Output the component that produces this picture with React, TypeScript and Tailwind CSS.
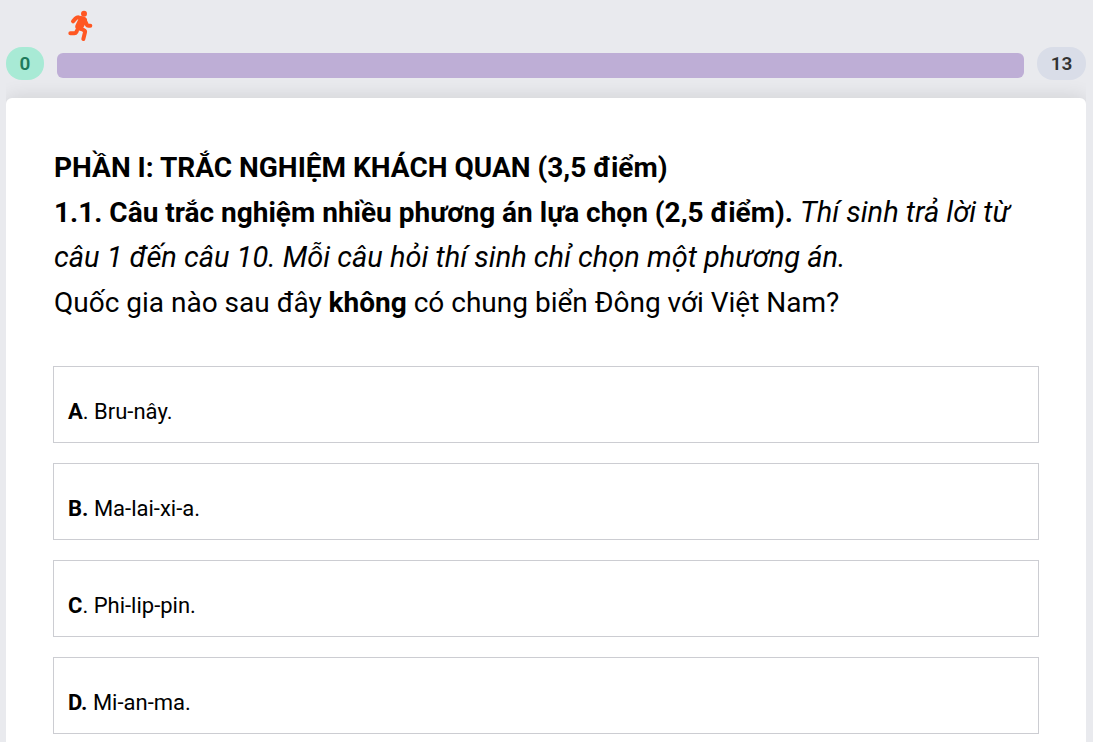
const TOTAL = 13

const ANSWERS: Array<{ id: string; mark: React.ReactNode; label: string }> = [
  { id: 'a', mark: <><b>A</b>.</>, label: 'Bru-nây.' },
  { id: 'b', mark: <b>B.</b>, label: 'Ma-lai-xi-a.' },
  { id: 'c', mark: <><b>C</b>.</>, label: 'Phi-lip-pin.' },
  { id: 'd', mark: <b>D.</b>, label: 'Mi-an-ma.' },
]

function Runner() {
  return (
    <svg width="26" height="32" viewBox="0 0 78 96" fill="none" aria-hidden="true">
      <circle cx="51" cy="11" r="9" fill="currentColor" />
      <path d="M38 18 L54 22 Q63 26 59 34 L50 51 L40 63 L29 58 Q22 52 26 44 L34 28Z" fill="currentColor" />
      <g stroke="currentColor" strokeWidth="12" strokeLinecap="round" strokeLinejoin="round">
        <path d="M18 34 L26 25 Q29 22 34 22 L50 26" />
        <path d="M53 30 L60 45 Q61 47 64 47 H70" />
        <path d="M37 53 L51 61 Q55 63 54 67 L49 87" />
        <path d="M10 70 H22 Q26 70 28 66 L30 62" />
      </g>
    </svg>
  )
}

function ProgressHeader({ done }: { done: number }) {
  return (
    <header className="pt-[10px] pr-[7px] pl-[6px]">
      <div className="pl-[61px] text-[#ff5722]">
        <Runner />
      </div>
      <div className="mt-[5px] flex items-center gap-[13px] text-[19px] leading-none font-semibold">
        <span className="flex h-[33px] w-[38px] items-center justify-center rounded-2xl bg-[#a8ead5] text-[#1f7a5c]">
          {done}
        </span>
        <div className="mt-1 h-[25px] flex-1 rounded-md bg-[#beaed6]" />
        <span className="flex h-[33px] w-[49px] items-center justify-center rounded-2xl bg-[#d9dde8] text-[#333]">
          {TOTAL}
        </span>
      </div>
    </header>
  )
}

export default function App() {
  return (
    <div className="min-h-screen bg-[#e9eaee] font-['Roboto',sans-serif] text-black">
      <ProgressHeader done={0} />
      {/* the wrapper clips the card shadow at its sides */}
      <div className="mr-[7px] ml-[6px] overflow-hidden pt-[18px]">
        <main className="rounded-t-md bg-white px-[47px] pt-[47px] pb-5 shadow-[0_0_20px_rgba(0,0,0,0.12)]">
          <div className="pl-px text-[28px] leading-[45px]">
            <h1 className="font-bold">PHẦN I: TRẮC NGHIỆM KHÁCH QUAN (3,5 điểm)</h1>
            <p>
              <b>1.1. Câu trắc nghiệm nhiều phương án lựa chọn (2,5 điểm).</b>{' '}
              <i className="text-[29px]">
                Thí sinh trả lời từ câu 1 đến câu 10. Mỗi câu hỏi thí sinh chỉ chọn một phương án.
              </i>
            </p>
            <p>
              Quốc gia nào sau đây <b>không</b> có chung biển Đông với Việt Nam?
            </p>
          </div>
          <div className="mt-[41px] flex flex-col gap-5">
            {ANSWERS.map(({ id, mark, label }) => (
              <button
                key={id}
                type="button"
                className="h-[77px] border border-[#cccdd2] px-[14px] pt-[14px] text-left text-[22px] leading-[33px]"
              >
                {mark} {label}
              </button>
            ))}
          </div>
        </main>
      </div>
    </div>
  )
}
